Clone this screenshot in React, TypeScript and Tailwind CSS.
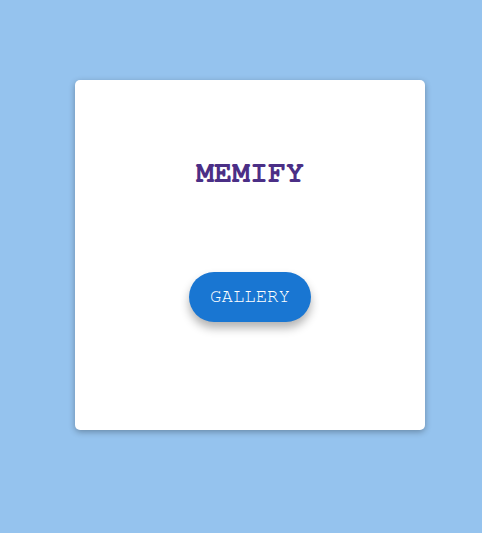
import React from "react";

const mono = '"Nimbus Mono PS", "Nimbus Mono L", "FreeMono", "Courier 10 Pitch", "Courier", "Liberation Mono", monospace';

export default function App() {
  return (
    <div className="min-h-[533px] w-full bg-[#95c3ee] pt-[80px] pl-[75px]">
      <div className="flex h-[350px] w-[350px] flex-col items-center rounded-[5px] bg-white shadow-[0_2px_6px_rgba(0,0,0,0.3)]">
        <h1
          className="mt-[76px] text-[30px] font-bold leading-[34px] text-[#4b2f86]"
          style={{ fontFamily: mono }}
        >
          MEMIFY
        </h1>
        <button
          className="mt-[82px] flex h-[50px] w-[122px] items-center justify-center rounded-full bg-[#1976d2] text-[19px] text-white shadow-[0_6px_10px_rgba(0,0,0,0.3)]"
          style={{ fontFamily: mono }}
        >
          GALLERY
        </button>
      </div>
    </div>
  );
}
